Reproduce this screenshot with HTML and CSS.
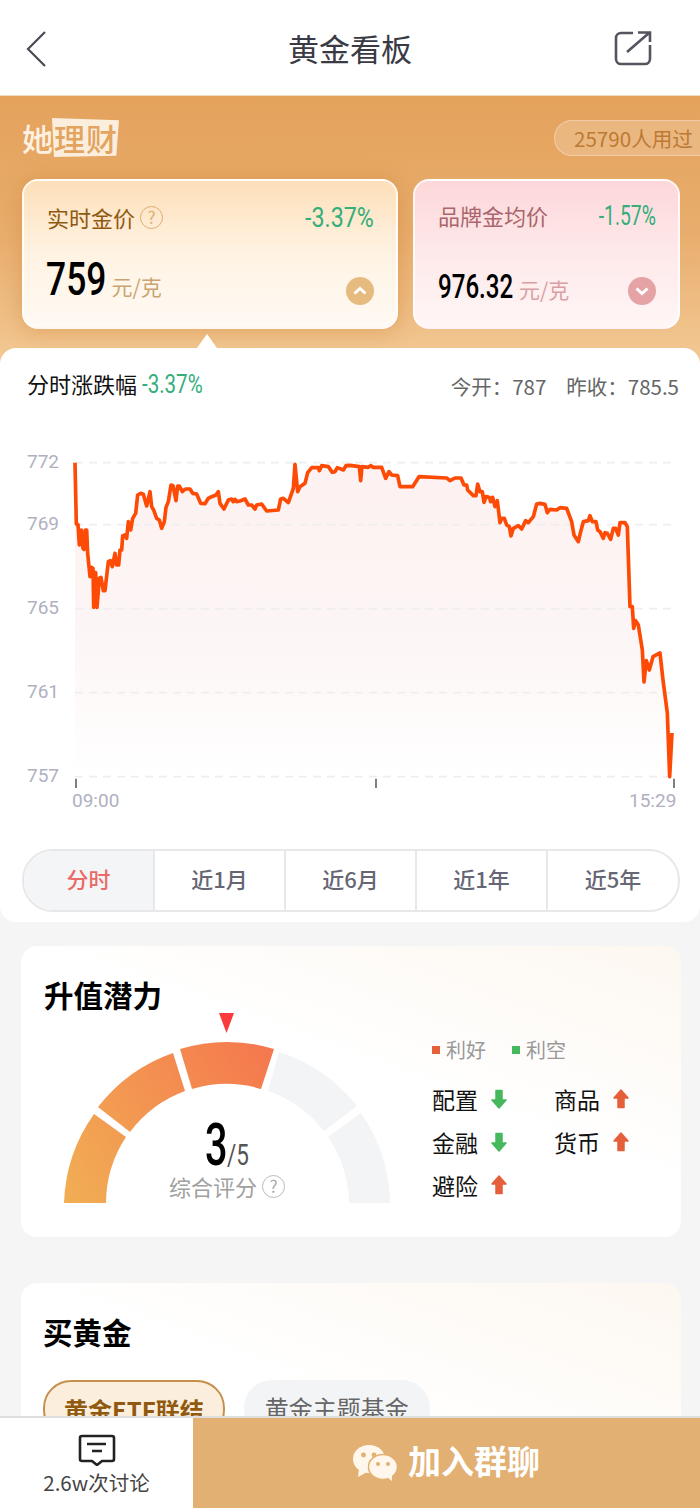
FILE: index.html
```html
<!DOCTYPE html>
<html lang="zh-CN">
<head>
  <meta charset="UTF-8" />
  <meta name="viewport" content="width=device-width, initial-scale=1.0"/>
  <title>黄金看板</title>
  <link rel="stylesheet" href="styles.css">
</head>
<body>
  <div class="app">
    <header class="topbar">
      <svg class="back-icon" width="24" height="40" viewBox="0 0 24 40"><path d="M21 3 L4 20 L21 37" fill="none" stroke="#4a4a55" stroke-width="2.2"/></svg>
      <h1>黄金看板</h1>
      <svg class="share-icon" width="40" height="38" viewBox="0 0 40 38"><path d="M20 4 H8 a5 5 0 0 0 -5 5 V30 a5 5 0 0 0 5 5 H32 a5 5 0 0 0 5 -5 V16 M14 23 L36 4 M25 3.5 H37 V13" fill="none" stroke="#55555f" stroke-width="2.6"/></svg>
    </header>

    <section class="hero">
      <div class="hero-top">
        <div class="logo"><span class="logo-bg"></span><span class="logo-text">她<em>理财</em></span></div>
        <div class="used-pill">25790人用过</div>
      </div>
      <div class="price-cards">
        <div class="price-card gold">
          <div class="card-row">
            <span class="card-label">实时金价<span class="help">?</span></span>
            <span class="num change">-3.37%</span>
          </div>
          <div class="card-row bottom">
            <span class="price-line-wrap"><span class="num price big">759</span><span class="unit">元/克</span></span>
            <svg class="toggle" width="28" height="28" viewBox="0 0 28 28"><circle cx="14" cy="14" r="14" fill="#e6bb7f"/><path d="M8.5 16.5 L14 11.5 L19.5 16.5" fill="none" stroke="#fff" stroke-width="3"/></svg>
          </div>
        </div>
        <div class="price-card brand">
          <div class="card-row">
            <span class="card-label">品牌金均价</span>
            <span class="num change">-1.57%</span>
          </div>
          <div class="card-row bottom">
            <span class="price-line-wrap"><span class="num price">976.32</span><span class="unit">元/克</span></span>
            <svg class="toggle" width="28" height="28" viewBox="0 0 28 28"><circle cx="14" cy="14" r="14" fill="#e5a3a6"/><path d="M8.5 11.5 L14 16.5 L19.5 11.5" fill="none" stroke="#fff" stroke-width="3"/></svg>
          </div>
        </div>
      </div>
    </section>

    <section class="chart-panel">
      <div class="chart-head">
        <span class="chart-title">分时涨跌幅 <span class="num chart-change">-3.37%</span></span>
        <span class="chart-stats"><span>今开：787</span><span>昨收：785.5</span></span>
      </div>
      <svg class="chart" width="700" height="400" viewBox="0 0 700 400">
        <defs>
          <linearGradient id="areaFill" x1="0" y1="0" x2="0" y2="1">
            <stop offset="0" stop-color="#fdf1f1"/>
            <stop offset=".6" stop-color="#fdf6f6"/>
            <stop offset="1" stop-color="#ffffff"/>
          </linearGradient>
        </defs>
        <g transform="translate(0,-90) scale(.33333)">
          <polygon fill="url(#areaFill)" points="225,1278 225,338 229,522 234,524 238,585 244,540 249,595 252,598 256,540 260,540 263,610 270,680 274,652 279,655 281,772 284,668 287,668 291,772 298,685 303,682 310,722 315,722 325,635 331,632 337,650 345,610 350,645 356,645 360,600 365,600 368,558 375,555 380,565 385,515 392,540 398,505 407,490 413,435 422,430 430,433 440,468 450,425 455,470 461,480 470,505 478,510 485,535 493,515 498,472 505,455 513,405 519,407 528,452 533,408 538,408 547,425 556,417 570,417 578,430 590,432 602,460 615,461 625,445 635,440 648,435 655,425 660,460 672,477 685,450 695,447 700,455 705,448 710,455 722,452 735,447 745,465 755,465 765,477 770,465 785,462 800,483 835,480 842,447 850,445 865,458 880,415 885,343 893,425 900,410 915,400 923,368 935,353 955,353 958,362 965,347 985,350 997,367 1005,365 1012,353 1030,360 1038,347 1050,346 1078,350 1082,392 1086,350 1105,352 1112,347 1120,352 1145,352 1157,385 1167,365 1175,375 1193,377 1200,410 1238,410 1257,380 1340,384 1350,392 1365,384 1383,384 1392,405 1400,405 1403,420 1420,437 1428,437 1433,402 1440,425 1447,425 1452,457 1458,440 1468,442 1472,455 1478,442 1485,470 1492,452 1500,518 1505,505 1513,505 1520,525 1528,530 1533,558 1540,535 1555,527 1565,537 1577,512 1585,518 1600,500 1610,462 1620,460 1635,463 1642,488 1650,478 1670,480 1680,473 1700,475 1715,515 1722,555 1735,575 1742,545 1750,515 1765,512 1770,497 1777,515 1788,515 1793,540 1800,545 1810,565 1815,548 1822,550 1832,568 1840,535 1847,535 1855,555 1860,518 1875,518 1882,530 1890,770 1897,770 1901,835 1907,812 1915,825 1927,900 1932,996 1939,932 1948,960 1959,920 1980,909 1989,990 2002,1089 2009,1280 2016,1149 2016,1278"/>
          <g class="grid">
            <path d="M225 338 H2025"/><path d="M225 524 H2025"/><path d="M225 776 H2025"/><path d="M225 1028 H2025"/><path d="M225 1280 H2025"/>
          </g>
          <polyline class="price-line" points="225,338 229,522 234,524 238,585 244,540 249,595 252,598 256,540 260,540 263,610 270,680 274,652 279,655 281,772 284,668 287,668 291,772 298,685 303,682 310,722 315,722 325,635 331,632 337,650 345,610 350,645 356,645 360,600 365,600 368,558 375,555 380,565 385,515 392,540 398,505 407,490 413,435 422,430 430,433 440,468 450,425 455,470 461,480 470,505 478,510 485,535 493,515 498,472 505,455 513,405 519,407 528,452 533,408 538,408 547,425 556,417 570,417 578,430 590,432 602,460 615,461 625,445 635,440 648,435 655,425 660,460 672,477 685,450 695,447 700,455 705,448 710,455 722,452 735,447 745,465 755,465 765,477 770,465 785,462 800,483 835,480 842,447 850,445 865,458 880,415 885,343 893,425 900,410 915,400 923,368 935,353 955,353 958,362 965,347 985,350 997,367 1005,365 1012,353 1030,360 1038,347 1050,346 1078,350 1082,392 1086,350 1105,352 1112,347 1120,352 1145,352 1157,385 1167,365 1175,375 1193,377 1200,410 1238,410 1257,380 1340,384 1350,392 1365,384 1383,384 1392,405 1400,405 1403,420 1420,437 1428,437 1433,402 1440,425 1447,425 1452,457 1458,440 1468,442 1472,455 1478,442 1485,470 1492,452 1500,518 1505,505 1513,505 1520,525 1528,530 1533,558 1540,535 1555,527 1565,537 1577,512 1585,518 1600,500 1610,462 1620,460 1635,463 1642,488 1650,478 1670,480 1680,473 1700,475 1715,515 1722,555 1735,575 1742,545 1750,515 1765,512 1770,497 1777,515 1788,515 1793,540 1800,545 1810,565 1815,548 1822,550 1832,568 1840,535 1847,535 1855,555 1860,518 1875,518 1882,530 1890,770 1897,770 1901,835 1907,812 1915,825 1927,900 1932,996 1939,932 1948,960 1959,920 1980,909 1989,990 2002,1089 2009,1280 2016,1149"/>
          <g class="ticks">
            <path d="M228 1286 V1314"/><path d="M1128 1286 V1314"/><path d="M2022 1286 V1314"/>
          </g>
        </g>
        <g class="y-labels">
          <text x="27" y="28">772</text>
          <text x="27" y="90">769</text>
          <text x="27" y="174">765</text>
          <text x="27" y="258">761</text>
          <text x="27" y="342">757</text>
        </g>
        <g class="x-labels">
          <text x="72" y="367">09:00</text>
          <text x="629" y="367">15:29</text>
        </g>
      </svg>
      <div class="range-tabs">
        <div class="range-tab active">分时</div>
        <div class="range-tab">近1月</div>
        <div class="range-tab">近6月</div>
        <div class="range-tab">近1年</div>
        <div class="range-tab">近5年</div>
      </div>
    </section>

    <section class="card potential">
      <h2>升值潜力</h2>
      <div class="potential-body">
        <div class="gauge">
          <svg width="340" height="197" viewBox="0 0 340 197">
            <defs>
              <linearGradient id="gaugeFill" gradientUnits="userSpaceOnUse" x1="-160" y1="0" x2="50" y2="-130">
                <stop offset="0" stop-color="#f1ae54"/>
                <stop offset="1" stop-color="#f5794e"/>
              </linearGradient>
            </defs>
            <path fill="#fb3a3c" d="M162 0 H177 L169.5 20 Z"/>
            <g transform="translate(170,190)">
              <path fill="url(#gaugeFill)" d="M-163 0 A163 163 0 0 1 -133 -89 L-101 -66 A121 121 0 0 0 -121 0 Z"/>
              <path fill="url(#gaugeFill)" d="M-129 -96 A163 163 0 0 1 -54 -150 L-42 -112 A121 121 0 0 0 -97 -71 Z"/>
              <path fill="url(#gaugeFill)" d="M-47 -154 A163 163 0 0 1 47 -154 L34 -114 A121 121 0 0 0 -35 -114 Z"/>
              <path fill="#f3f4f6" d="M52 -151 A163 163 0 0 1 130 -97 L97 -72 A121 121 0 0 0 41 -112 Z"/>
              <path fill="#f3f4f6" d="M134 -90 A163 163 0 0 1 163 0 L122 0 A121 121 0 0 0 101 -66 Z"/>
            </g>
          </svg>
          <div class="score"><span class="num score-value">3</span><span class="num score-total">/5</span></div>
          <div class="score-label">综合评分<span class="help grey">?</span></div>
        </div>
        <div class="factors">
          <div class="legend">
            <span class="legend-item"><i class="dot red"></i>利好</span>
            <span class="legend-item"><i class="dot green"></i>利空</span>
          </div>
          <div class="factor-grid">
            <div class="factor">配置<svg class="arrow down" width="16" height="20" viewBox="0 0 16 20"><path d="M8 1 L15 9 H11 V18.5 H5 V9 H1 Z"/></svg></div>
            <div class="factor">商品<svg class="arrow" width="16" height="20" viewBox="0 0 16 20"><path d="M8 1 L15 9 H11 V18.5 H5 V9 H1 Z"/></svg></div>
            <div class="factor">金融<svg class="arrow down" width="16" height="20" viewBox="0 0 16 20"><path d="M8 1 L15 9 H11 V18.5 H5 V9 H1 Z"/></svg></div>
            <div class="factor">货币<svg class="arrow" width="16" height="20" viewBox="0 0 16 20"><path d="M8 1 L15 9 H11 V18.5 H5 V9 H1 Z"/></svg></div>
            <div class="factor">避险<svg class="arrow" width="16" height="20" viewBox="0 0 16 20"><path d="M8 1 L15 9 H11 V18.5 H5 V9 H1 Z"/></svg></div>
          </div>
        </div>
      </div>
    </section>

    <section class="card buy">
      <h2>买黄金</h2>
      <div class="chips">
        <div class="chip active">黄金ETF联结</div>
        <div class="chip">黄金主题基金</div>
      </div>
    </section>

    <footer class="bottom-bar">
      <div class="discuss">
        <svg width="38" height="32" viewBox="0 0 38 32"><path d="M4 2 H34 a2 2 0 0 1 2 2 V25 a2 2 0 0 1 -2 2 H24 L19 31 L14 27 H4 a2 2 0 0 1 -2 -2 V4 a2 2 0 0 1 2 -2 Z M9 10 H28 M14 17 H24" fill="none" stroke="#222" stroke-width="2.6"/></svg>
        <span>2.6w次讨论</span>
      </div>
      <div class="join">
        <svg width="44" height="36" viewBox="0 0 44 36">
          <ellipse cx="16" cy="14" rx="16" ry="14" fill="#fff7ec"/>
          <path d="M6 24 L5 32 L14 27 Z" fill="#fff7ec"/>
          <ellipse cx="30" cy="22" rx="14.5" ry="12.5" fill="#fff7ec" stroke="#e2b072" stroke-width="1.5"/>
          <path d="M34 32 L39 36 L39 29 Z" fill="#fff7ec"/>
          <circle cx="10.5" cy="10" r="2.4" fill="#e2b072"/><circle cx="21" cy="10" r="2.4" fill="#e2b072"/>
          <circle cx="25" cy="19" r="2" fill="#e2b072"/><circle cx="35" cy="19" r="2" fill="#e2b072"/>
        </svg>
        <span>加入群聊</span>
      </div>
    </footer>
  </div>
</body>
</html>
```

FILE: styles.css
```css
* {
  box-sizing: border-box;
}

body {
  margin: 0;
  font-family: "Noto Sans CJK SC", "Noto Sans", sans-serif;
  background: #f5f5f6;
  color: #111;
}

.app {
  position: relative;
  height: 1508px;
  overflow: hidden;
}

/* digits in the reference are a condensed face, squeeze Roboto to get there */
.num {
  display: inline-block;
  font-family: "Roboto", sans-serif;
  transform-origin: left center;
}

/* top bar */
.topbar {
  position: relative;
  height: 96px;
  background: #fff;
  border-bottom: 1px solid #efdcc6;
  display: flex;
  justify-content: center;
  align-items: center;
}

.topbar h1 {
  margin: 0;
  font-size: 31px;
  font-weight: 400;
  color: #3a3a45;
}

.back-icon {
  position: absolute;
  left: 24px;
  top: 29px;
}

.share-icon {
  position: absolute;
  left: 613px;
  top: 29px;
}

/* orange header block */
.hero {
  height: 268px;
  padding: 22px 20px 0 22px;
  background: linear-gradient(180deg, #e4a25c 0%, #e8ad6c 50%, #f3c995 100%);
}

.hero-top {
  display: flex;
  justify-content: space-between;
  align-items: flex-start;
  height: 61px;
  margin-right: -20px;
}

.logo {
  position: relative;
  width: 97px;
  height: 38px;
}

.logo-bg {
  position: absolute;
  left: 30px;
  top: 0;
  width: 67px;
  height: 39px;
  background: #fbeedd;
  clip-path: polygon(0 0, 100% 6%, 96% 97%, 3% 100%);
}

.logo-text {
  position: absolute;
  left: 0;
  top: -3px;
  font-size: 31px;
  font-weight: 500;
  line-height: 45px;
  color: #fdf1e2;
  letter-spacing: 1px;
}

.logo-text em {
  font-style: normal;
  color: #e3a45f;
}

.used-pill {
  height: 36px;
  width: 146px;
  margin-top: 2px;
  padding-left: 19px;
  font-size: 20.6px;
  line-height: 34px;
  white-space: nowrap;
  color: #bd7a32;
  background: rgba(255, 255, 255, 0.2);
  border: 1px solid rgba(255, 255, 255, 0.3);
  border-right: 0;
  border-radius: 18px 0 0 18px;
}

.price-cards {
  display: flex;
  gap: 15px;
}

.price-card {
  position: relative;
  height: 150px;
  border: 2px solid rgba(255, 255, 255, 0.75);
  border-radius: 16px;
  padding: 20px 22px 22px 23px;
  display: flex;
  flex-direction: column;
  justify-content: space-between;
}

.price-card.gold {
  width: 376px;
  background: linear-gradient(180deg, #fddfb9 0%, #fff3e3 50%, #fffaf4 100%);
  box-shadow: 0 2px 22px rgba(201, 126, 50, 0.45);
}

.price-card.gold::after {
  content: "";
  position: absolute;
  left: 173px;
  bottom: -21px;
  border: 10px solid transparent;
  border-top: 0;
  border-bottom: 14px solid #fff;
}

.price-card.brand {
  width: 267px;
  background: linear-gradient(180deg, #fdd7da 0%, #fee9ea 50%, #fff6f6 100%);
}

.brand .card-row:first-child {
  margin-top: -2px;
}

.card-row {
  display: flex;
  justify-content: space-between;
  align-items: center;
}

.card-row.bottom {
  align-items: flex-end;
}

.price-line-wrap {
  display: flex;
  align-items: baseline;
}

.brand .price-line-wrap {
  margin-bottom: -2px;
}

.card-label {
  font-size: 22px;
  line-height: 32px;
  color: #8f5a10;
  display: flex;
  align-items: center;
}

.brand .card-label {
  color: #a9656b;
}

.change {
  font-size: 28px;
  line-height: 32px;
  color: #34ae7a;
  transform-origin: right center;
  transform: translateY(1px) scaleX(0.83);
}

.brand .change {
  transform: translateY(1px) scaleX(0.69);
}

.price {
  font-size: 33px;
  font-weight: 500;
  line-height: 40px;
  color: #000;
  transform: scaleX(0.73);
  margin-right: -27px;
}

.price.big {
  font-size: 46px;
  line-height: 52px;
  margin-left: -1px;
  margin-right: -18px;
  transform: scaleX(0.77);
}

.unit {
  margin-left: 5px;
  font-size: 21px;
  color: #c9a472;
}

.brand .unit {
  color: #d9a0a3;
}

.help {
  width: 23px;
  height: 23px;
  margin-left: 5px;
  border: 1.5px solid #dfae73;
  border-radius: 50%;
  color: #dfae73;
  font-size: 17px;
  line-height: 20px;
  text-align: center;
  display: inline-block;
}

.help.grey {
  border-color: #bbb;
  color: #aaa;
}

/* chart */
.chart-panel {
  position: relative;
  height: 574px;
  margin-top: -16px;
  background: #fff;
  border-radius: 16px;
}

.chart-head {
  height: 92px;
  padding: 19px 21px 0 27px;
  display: flex;
  justify-content: space-between;
}

.chart-title {
  font-size: 22px;
  line-height: 32px;
}

.chart-change {
  font-size: 25px;
  color: #34ae7a;
  transform: scaleX(0.82);
}

.chart-stats {
  font-size: 20.5px;
  line-height: 38px;
  color: #666;
  display: flex;
  gap: 20px;
}

.chart {
  display: block;
}

.grid path {
  stroke: #eeeeee;
  stroke-width: 5;
  stroke-dasharray: 24 18;
  fill: none;
}

.price-line {
  fill: none;
  stroke: #fd4a05;
  stroke-width: 11;
  stroke-linejoin: round;
}

.ticks path {
  stroke: #666;
  stroke-width: 5;
}

.y-labels text,
.x-labels text {
  font-family: "Roboto", sans-serif;
  font-size: 19px;
  fill: #b0b0c0;
}

.range-tabs {
  margin: 9px 20px 0 22px;
  height: 63px;
  border: 2px solid #e8e8ea;
  border-radius: 31px;
  display: grid;
  grid-template-columns: 131px 131px 131px 131px 1fr;
  overflow: hidden;
}

.range-tab {
  border-right: 2px solid #e8e8ea;
  font-size: 22px;
  font-weight: 500;
  line-height: 54px;
  text-align: center;
  color: #666674;
}

.range-tab:last-child {
  border-right: 0;
}

.range-tab.active {
  background: #f4f5f7;
  color: #e96a66;
}

/* lower cards */
.card {
  margin: 24px 19px 0 21px;
  background: linear-gradient(200deg, #fdf7f0 0%, #ffffff 45%);
  border-radius: 16px;
}

.card h2 {
  margin: 0;
  font-size: 29.5px;
  line-height: 44px;
  font-weight: 700;
  color: #000;
}

.potential {
  height: 291px;
  padding: 26px 23px 0;
}

.potential-body {
  display: flex;
}

.gauge {
  position: relative;
  width: 340px;
  height: 197px;
  margin-left: 13px;
  margin-top: -3px;
}

.gauge svg {
  display: block;
}

.score {
  position: absolute;
  left: 0;
  width: 340px;
  top: 111px;
  height: 42px;
  display: flex;
  justify-content: center;
  align-items: baseline;
  line-height: 42px;
}

.score-value {
  font-size: 60px;
  font-weight: 500;
  color: #000;
  transform: scaleX(0.66);
  margin-right: -11.5px;
}

.score-total {
  font-size: 30px;
  color: #555;
  transform: scaleX(0.75);
  margin-right: -7px;
}

.score-label {
  position: absolute;
  left: 112px;
  top: 157px;
  font-size: 22px;
  line-height: 32px;
  color: #a0a0a0;
  display: flex;
  align-items: center;
  white-space: nowrap;
}

.factors {
  margin-left: 35px;
  margin-top: 19px;
}

.legend {
  display: flex;
  gap: 26px;
  font-size: 20px;
  line-height: 30px;
  color: #999;
}

.legend-item {
  display: flex;
  align-items: center;
  gap: 6px;
}

.dot {
  width: 8px;
  height: 8px;
}

.dot.red {
  background: #e55f3b;
}

.dot.green {
  background: #46b85d;
}

.factor-grid {
  margin-top: 17px;
  display: grid;
  grid-template-columns: 122px 100px;
  row-gap: 9px;
}

.factor {
  display: flex;
  align-items: center;
  gap: 13px;
  font-size: 23px;
  line-height: 34px;
  color: #111;
}

.arrow path {
  fill: #e55f3b;
  stroke: #e55f3b;
  stroke-width: 1.5;
  stroke-linejoin: round;
}

.arrow.down {
  transform: rotate(180deg);
}

.arrow.down path {
  fill: #46b85d;
  stroke: #46b85d;
}

.buy {
  margin-top: 46px;
  height: 300px;
  padding: 26px 22px 0;
}

.chips {
  display: flex;
  gap: 19px;
  margin-top: 27px;
}

.chip {
  height: 58px;
  padding: 0 21px;
  border-radius: 28px;
  font-size: 24px;
  line-height: 56px;
  color: #666;
  background: #f3f4f6;
}

.chip.active {
  padding: 0 19px;
  border: 2px solid #c4904c;
  background: #fbeedd;
  color: #8f5a10;
  font-weight: 700;
}

/* bottom bar */
.bottom-bar {
  position: absolute;
  left: 0;
  right: 0;
  bottom: 0;
  height: 92px;
  display: flex;
  border-top: 2px solid #dedede;
}

.discuss {
  width: 193px;
  background: #fff;
  display: flex;
  flex-direction: column;
  align-items: center;
  padding-top: 16px;
  font-size: 20.5px;
  line-height: 32px;
  color: #444;
}

.discuss svg {
  display: block;
}

.join {
  flex: 1;
  background: #e2b072;
  color: #fff;
  font-size: 33px;
  font-weight: 700;
  display: flex;
  justify-content: center;
  align-items: center;
  gap: 11px;
}

.join span {
  margin-top: -6px;
}
```
